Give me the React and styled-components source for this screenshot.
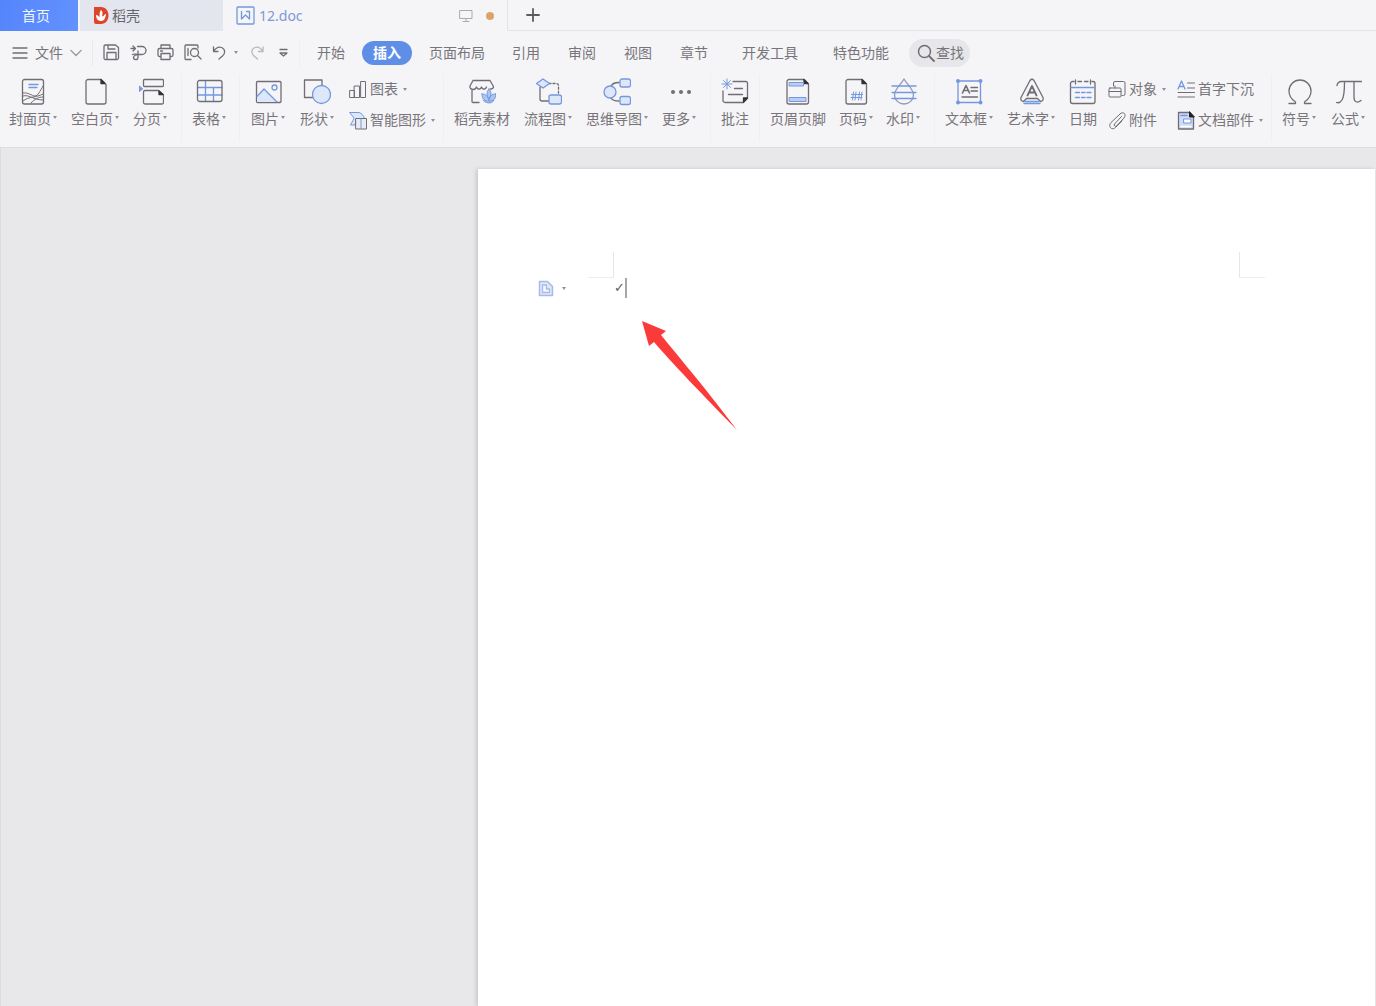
import styled, { createGlobalStyle } from "styled-components"

const GlobalStyle = createGlobalStyle`
    * {
        box-sizing: border-box;
    }
    body {
        margin: 0;
        font-family: "Noto Sans", "Noto Sans CJK SC", sans-serif;
        font-size: 14px;
        color: #77757a;
        background-color: #e8e7ea;
    }
    button {
        font: inherit;
        color: inherit;
        border: none;
        background: none;
        padding: 0;
        cursor: pointer;
        white-space: nowrap;
    }
`
const Container = styled.div`
    min-height: 100vh;
    display: flex;
    flex-direction: column;
    overflow-x: hidden;
`
const Header = styled.header`
    background-color: #f5f4f7;
    border-bottom: 1px solid #dcdbdf;
`
const TabBar = styled.div`
    display: flex;
    height: 31px;
    line-height: 20px;
`
const HomeTab = styled.button`
    width: 78px;
    padding-right: 6px;
    color: #f2f6ff;
    background: linear-gradient(100deg, #5585fb, #6292ff);
`
const DockerTab = styled.button`
    display: flex;
    align-items: center;
    gap: 3px;
    width: 143px;
    margin-left: 2px;
    padding-left: 13px;
    color: #66656b;
    background-color: #e4e6ef;
`
const FileTab = styled.div`
    display: flex;
    align-items: center;
    width: 285px;
    padding: 0 13px;
    color: #7c9ad6;
    border-right: 1px solid #e2e1e6;
`
const FileName = styled.span`
    flex: 1;
    margin-left: 4px;
`
const UnsavedDot = styled.span`
    width: 8px;
    height: 8px;
    margin-left: 13px;
    border-radius: 50%;
    background-color: #dca568;
`
const TabRest = styled.div`
    flex: 1;
    display: flex;
    border-bottom: 1px solid #e4e3e8;
`
const NewTab = styled.button`
    display: flex;
    align-items: center;
    justify-content: center;
    width: 50px;
`
const MenuBar = styled.nav`
    display: flex;
    align-items: center;
    height: 43px;
    line-height: 20px;
`
const FileMenu = styled.button`
    display: flex;
    align-items: center;
    gap: 7px;
    height: 26px;
    padding: 0 10px 0 12px;
    border-right: 1px solid #e9e8ec;
`
const QuickBar = styled.div`
    display: flex;
    align-items: center;
    gap: 7px;
    height: 26px;
    padding: 0 5px 0 9px;
    border-right: 1px solid #eeedf0;
`
const QuickButton = styled.button`
    display: flex;
    align-items: center;
    gap: 2px;
    padding-left: ${props => props.$off ? 2 : 0}px;
    opacity: ${props => props.$off ? 0.45 : 1};
`
const MenuItem = styled.button`
    height: 24px;
    margin-left: ${props => props.$gap || 28}px;
    padding: ${props => props.$active ? "0 11px" : "0"};
    border-radius: 12px;
    font-weight: ${props => props.$active ? 700 : 400};
    color: ${props => props.$active ? "white" : "inherit"};
    background-color: ${props => props.$active ? "#5f8ee6" : "transparent"};
`
const Search = styled.button`
    display: flex;
    align-items: center;
    gap: 1px;
    height: 28px;
    margin-left: 20px;
    padding: 0 6px 0 8px;
    border-radius: 14px;
    background-color: #e7e6eb;
`
const Ribbon = styled.div`
    display: flex;
    height: 73px;
`
const Group = styled.div`
    flex: none;
    display: flex;
    align-items: flex-start;
    gap: ${props => props.$gap || 14}px;
    height: 68px;
    padding: 4px ${props => props.$end || 10}px 0 ${props => props.$start || 10}px;
    border-right: 1px solid ${props => props.$plain ? "transparent" : "#efeef1"};

    &:last-child {
        border-right: none;
    }
`
const ToolButton = styled.button`
    display: flex;
    flex-direction: column;
    align-items: center;
    gap: 4px;
`
const ToolLabel = styled.span`
    display: flex;
    align-items: center;
    line-height: 18px;
`
const Caret = styled.span`
    width: 4px;
    margin-left: 2px;
    border-top: 3px solid #929096;
    border-left: 2px solid transparent;
    border-right: 2px solid transparent;

    ${ToolLabel} & {
        margin-bottom: 3px;
    }
`
const SmallTools = styled.div`
    display: flex;
    gap: 11px;
    padding-top: 1px;
`
const SmallColumn = styled.div`
    display: flex;
    flex-direction: column;
    align-items: flex-start;
    gap: 11px;
`
const SmallButton = styled.button`
    display: flex;
    align-items: center;
    gap: 3px;
    height: 20px;
    line-height: 20px;
`
const Workspace = styled.main`
    flex: 1;
    display: flex;
    padding: 21px 1px 0 477px;
    border-left: 1px solid #dddce0;
`
const Paper = styled.article`
    position: relative;
    flex: 1;
    padding: 83px 110px 0 110px;
    background-color: white;
    box-shadow: -2px 0 4px #c9c8cb;
`
const Corners = styled.div`
    display: flex;
    justify-content: space-between;
`
const Corner = styled.span`
    width: 26px;
    height: 26px;
    border-bottom: 1px solid #ededef;
    border-left: ${props => props.$side === "right" ? "1px solid #e6e6e8" : "none"};
    border-right: ${props => props.$side === "left" ? "1px solid #e6e6e8" : "none"};
`
const Line = styled.div`
    display: flex;
    align-items: center;
    height: 20px;
    margin-left: -50px;
`
const PasteButton = styled.button`
    display: flex;
    align-items: center;
    gap: 6px;
`
const Typed = styled.span`
    margin-left: 48px;
    font-family: "DejaVu Sans", sans-serif;
    font-size: 13px;
    line-height: 20px;
    color: #5d5d5d;
    border-right: 2px solid #a5a5a5;
`
const Arrow = styled.svg`
    position: absolute;
    top: 152px;
    left: 164px;
`

const gray = "#706e74"
const blue = "#7498de"
const pale = "#dde7fa"

const Icon = ({ w = 28, h = 28, children }) => (
  <svg width={w} height={h} viewBox={`0 0 ${w} ${h}`} fill="none" stroke={gray} strokeWidth="1.3"
    strokeLinecap="round" strokeLinejoin="round" aria-hidden="true">
    {children}
  </svg>
)

const icons = {
  cover: <>
    <rect x="3.5" y="1.5" width="21" height="24.5" rx="2" />
    <path d="M10 6.5h9M10 9.5h8" stroke={blue} />
    <path d="M4 15c5-1 9 3 12 3s5-5 8-10M4 18c6-2 10 4 20 4M4 23c6-5 13-3 20-7M12 25c4-4 7-6 12-6" strokeWidth="1" />
  </>,
  blank: <>
    <path d="M20 1.5H7a2 2 0 0 0-2 2V24a2 2 0 0 0 2 2h16a2 2 0 0 0 2-2V6.5Z" />
    <path d="M20 1.5V5.5h4Z" fill="#333" stroke="#333" />
  </>,
  pageBreak: <>
    <rect x="7.5" y="1.5" width="20" height="7" rx="1" />
    <path d="M22.5 12.5H9a1.5 1.5 0 0 0-1.5 1.5v10.5a1.5 1.5 0 0 0 1.5 1.5h17a1.5 1.5 0 0 0 1.5-1.5V17Z" />
    <path d="M23 13v3.5h4Z" fill="#333" stroke="#333" />
    <path d="M3.5 8.5v5l3-2.5Z" fill={blue} stroke={blue} strokeWidth="1" />
  </>,
  table: <>
    <path d="M3 9.5h24M3 17h24M10.5 3v20M18.5 9.5v14" stroke={blue} />
    <rect x="2.5" y="2.5" width="24.5" height="21" rx="2" />
  </>,
  image: <>
    <rect x="2.5" y="3.5" width="24.5" height="21" rx="1" />
    <path d="M3 18.5 10 11l13 13H3Z" fill={pale} stroke="none" />
    <path d="m3 18.5 7-7.5 13 13" stroke={blue} />
    <circle cx="20.5" cy="9.5" r="2.5" stroke={blue} />
  </>,
  shapes: <>
    <rect x="1.5" y="2" width="17.5" height="17.5" />
    <circle cx="18.5" cy="16.5" r="9" fill={pale} stroke={blue} />
  </>,
  store: <>
    <path d="M5 2.5h17l3.5 6c0 2-2 2.5-3 2.5M5 2.5 2 8c-.5 2 1 3.5 3 3.5 2 0 3-1 3.5-2.5 1 3 4 3 5 0 1 3 4 3 5 0M4 12v11.5a1 1 0 0 0 1 1h6" />
    <path d="M21 11c3 3.5 2.5 6 0 10-2.5-4-3-6.5 0-10ZM14 16c4 0 6 2 7 7-5 0-7-2.5-7-7ZM27.5 16c-4 0-6 2-6.5 7 5 0 7-2.5 6.5-7ZM15 22c2 3 9 5 11 0" stroke={blue} fill="#aec5f2" strokeWidth="1" />
  </>,
  flow: <>
    <path d="M15 5.5h7.5a2 2 0 0 1 2 2V16" strokeDasharray="2 2" />
    <path d="M6 9v12a2 2 0 0 0 2 2h7" />
    <path d="m9 1 6.5 4.5L9 10 2.5 5.5Z" fill={pale} stroke={blue} />
    <rect x="15" y="17" width="12.5" height="9" rx="2" fill={pale} stroke={blue} />
  </>,
  mind: <>
    <path d="M8 8.5c1-3 3-4 8-4M8 20c1 2 3 3 8 3" />
    <circle cx="7" cy="14" r="6" fill={pale} stroke={blue} />
    <rect x="17" y="1" width="10.5" height="8" rx="2" fill={pale} stroke={blue} />
    <rect x="17" y="18.5" width="10.5" height="8" rx="2" fill={pale} stroke={blue} />
  </>,
  more: <g fill={gray} stroke="none">
    <circle cx="8" cy="14" r="2" />
    <circle cx="16" cy="14" r="2" />
    <circle cx="24" cy="14" r="2" />
  </g>,
  comment: <>
    <path d="M12 3.5h13a1.5 1.5 0 0 1 1.5 1.5v15l-4 4.5H4a2 2 0 0 1-2-2V13M13.5 10.5h8M7.5 16.5h14" />
    <path d="M22.5 24v-4h4Z" fill="#333" stroke="#333" />
    <path d="M6 1v10M1 6h10M2.5 2.5l7 7M9.5 2.5l-7 7" stroke={blue} strokeWidth="1" />
  </>,
  headerFooter: <>
    <path d="M20 1.5H5a2 2 0 0 0-2 2V24a2 2 0 0 0 2 2h17.5a2 2 0 0 0 2-2V6Z" />
    <path d="M20 1.5V5.5h4Z" fill="#333" stroke="#333" />
    <rect x="5.5" y="4.5" width="14" height="3.5" fill="#bccdf2" stroke={blue} strokeWidth="1" />
    <rect x="5.5" y="19.5" width="16.5" height="4" fill="#bccdf2" stroke={blue} strokeWidth="1" />
  </>,
  pageNumber: <>
    <path d="M20 1.5H6a2 2 0 0 0-2 2V24a2 2 0 0 0 2 2h16.500a2 2 0 0 0 2-2V6Z" />
    <path d="M20 1.5V5.5h4Z" fill="#333" stroke="#333" />
    <path d="M11.5 14 10.5 22M14 14l-1 8M17.5 14l-1 8M20 14l-1 8M9.5 16.5h11M9 19.5h11" stroke={blue} strokeWidth="1" />
  </>,
  watermark: <>
    <path d="M15 1c3 5.5 9.5 10 9.5 16a9.5 9 0 0 1-19 0C5.5 11 12 6.5 15 1Z" stroke="#8f9bb8" />
    <path d="M3 8h24M3 14.5h24M3 20.5h24" stroke={blue} />
  </>,
  textBox: <>
    <path d="M16 9.5h6.5M16 13h6.5M7 19h15.5" />
    <path d="M7.5 15 11 7.5 14.5 15M8.5 12.5h5" strokeWidth="1.6" />
    <rect x="3" y="3" width="22.5" height="21.5" stroke={blue} />
    <g fill={blue} stroke="none">
      <circle cx="3" cy="3" r="2" />
      <circle cx="25.5" cy="3" r="2" />
      <circle cx="3" cy="24.5" r="2" />
      <circle cx="25.5" cy="24.5" r="2" />
    </g>
  </>,
  wordArt: <>
    <path d="M13 2.5q2-2.5 4 0l9 17q1 3.5-2.5 4l-3-3H9.5l-3 3q-3.5-.5-2.5-4Z" />
    <path d="m10.5 17.5 4.5-9.5 4.5 9.5M12 14.5h6" strokeWidth="1.8" />
    <path d="M8 23.5h14M7 25.5h16" stroke={blue} />
  </>,
  date: <>
    <path d="M5 3.5H3.5A2 2 0 0 0 1.5 5.5v18a2 2 0 0 0 2 2H24a2 2 0 0 0 2-2v-18a2 2 0 0 0-2-2h-1M9 3.5h3.5M15.5 3.5H19M6.5 2v4M21.5 2v4" />
    <path d="M2 9.5h24M6.5 14.5h4M12.5 14.5h3.5M18 14.5h4M6.5 19.5h4M12.5 19.5h3.5M18 19.5h4" stroke={blue} />
  </>,
  omega: <path d="M4 25.5h6.5v-1.5C6 21 4 17 4 13a11 11 0 0 1 22 0c0 4-2 8-6.5 11v1.5H26" />,
  pi: <path d="M3 7.5C3.5 4.5 5 3.5 7.5 3.5H27.5M10.5 4c0 9-.5 15-2.5 18-1.5 2.5-4 3-5.5 2.5M20 4v15c0 5 3 6.5 7 3.5" />,
}

const smallIcons = {
  chart: <path d="M1 10.5h4.5v7H1ZM5.5 6h5v11.5h-5ZM12 1.5h4.5v16H12Z" strokeWidth="1" />,
  smart: <>
    <path d="M1 1.5h9c3 1 4.5 3 5.5 6H7.5L6 14H1.5L5 7.5Z" fill={pale} stroke={blue} strokeWidth="1" />
    <rect x="7" y="7.5" width="10.5" height="10.5" fill="#e8ebf2" strokeWidth="1" />
    <path d="M12 8v9.5" stroke={blue} strokeWidth="1" />
  </>,
  object: <g strokeWidth="1">
    <path d="M5.5 6V3A1.5 1.5 0 0 1 7 1.5h8.5A1.5 1.5 0 0 1 17 3v11a1.5 1.5 0 0 1-1.5 1.5H14" />
    <rect x="1" y="8" width="12" height="9" rx="1" />
    <path d="M1 11.5h12M7 8V6" />
  </g>,
  clip: <path d="m13.5 5.5-7 7.5c-1 1.500.5 3 2 2l7.5-8c3-4-1-7-4-4L3 11.5c-3.5 4 1 8.5 4.5 5L14 10" strokeWidth="1" />,
  dropCap: <>
    <path d="M10.5 3h7M10.5 8h7M1 12.5h16.5M1 17h16.5" strokeWidth="1" />
    <path d="m1 9 3.5-8L8 9M2.5 6.5h4.5" stroke={blue} />
  </>,
  parts: <>
    <path d="M1.5 1.5h11l4 4V18h-15Z" fill="#cfdcf6" />
    <path d="M12.5 1v5h4.5Z" fill="#222" stroke="#222" strokeWidth="1" />
    <path d="M4 4.5h6" stroke={blue} strokeWidth="1.5" />
    <rect x="7" y="8" width="7" height="4" fill="white" stroke={blue} strokeWidth="1" />
    <path d="M4 15.5h10" stroke="white" strokeWidth="1.5" />
  </>,
}

const Tool = ({ icon, text, drop }) => (
  <ToolButton type="button">
    <Icon>{icons[icon]}</Icon>
    <ToolLabel>{text}{drop && <Caret />}</ToolLabel>
  </ToolButton>
)

const SmallTool = ({ icon, text, drop }) => (
  <SmallButton type="button">
    <Icon w={18} h={19}>{smallIcons[icon]}</Icon>
    {text}
    {drop && <Caret />}
  </SmallButton>
)

const quickItems = [
  { name: "保存", icon: <path d="M3.5 2h10l3 2.5V15a1.5 1.5 0 0 1-1.5 1.5H3.5A1.5 1.5 0 0 1 2 15V3.5A1.5 1.5 0 0 1 3.5 2ZM6 2.5V6h7M5 16V9.5h9V16" /> },
  { name: "输出为PDF", icon: <path d="M2 5.5h4M4 3l2.5 2.5L4 8M8.5 3.5H13a4 4 0 0 1 0 8H9.5c-2.5 0-4-1-6 0M9 8v6.5c0 3-4.5 2.5-4.5 0 0-2 3-3 4.5-3" /> },
  { name: "打印", icon: <path d="M5 5.5V2h9v3.5M5 13.5H3.5A1.5 1.5 0 0 1 2 12V7a1.5 1.5 0 0 1 1.5-1.5h12A1.5 1.5 0 0 1 17 7v5a1.5 1.5 0 0 1-1.5 1.5H14M5 10.5h9v6H5ZM4.5 8h2" /> },
  { name: "打印预览", icon: <><path d="M8 16.5H3a1 1 0 0 1-1-1V3a1 1 0 0 1 1-1h11a1 1 0 0 1 1 1v2" /><circle cx="11.5" cy="9.5" r="4" /><path d="m14.5 12.5 3.5 3.5M5 5.5v7" /></> },
  { name: "撤销", drop: true, icon: <path d="M3.5 4v4.5h4.5M3.5 8.5c2-3 5-5 8-4 4 1.5 4 6 1 8.5L9 16" /> },
  { name: "恢复", off: true, icon: <path d="M16 4v4.5h-4.5M16 8.5c-2-3-5-5-8-4-4 1.5-4 6-1 8.5l3.5 3" /> },
  { name: "自定义", icon: <path d="M6 6.5h7M6 10l3.5 3 3.5-3Z" /> },
]

const menuItems = [
  { text: "开始", gap: 17 },
  { text: "插入", gap: 17, active: true },
  { text: "页面布局", gap: 17 },
  { text: "引用", gap: 27 },
  { text: "审阅" },
  { text: "视图" },
  { text: "章节" },
  { text: "开发工具", gap: 34 },
  { text: "特色功能", gap: 35 },
]

const App = () => {
  return (
    <Container>
      <GlobalStyle />
      <Header>
        <TabBar>
          <HomeTab type="button">首页</HomeTab>
          <DockerTab type="button">
            <Icon w={16} h={17}>
              <path d="M1 0h7c10 0 10 17 0 17H3a2 2 0 0 1-2-2Z" fill="#df4528" stroke="none" />
              <path d="M8 3c3 3 .5 4.5 1.5 6.5C11 9 11.5 7 13 7c-.5 4-1.5 7-5 7-3.5 0-5-3-5-6 2 0 2.5 1.5 3.5 2C7 7 6 5.5 8 3Z" fill="white" stroke="none" />
            </Icon>
            稻壳
          </DockerTab>
          <FileTab>
            <Icon w={19} h={19}>
              <g stroke={blue}>
                <rect x="1" y="1" width="17" height="17" rx="1" />
                <path d="M5.5 5.5v7.5l4-4 4 4V5.5h-3" />
              </g>
            </Icon>
            <FileName>12.doc</FileName>
            <Icon w={14} h={14}>
              <path d="M1 1.5h12v8H1ZM7 9.5v3M4 12.5h6" stroke="#aaa9ae" strokeWidth="1" />
            </Icon>
            <UnsavedDot />
          </FileTab>
          <TabRest>
            <NewTab type="button" aria-label="新建">
              <Icon w={14} h={14}>
                <path d="M7 1v12M1 7h12" stroke="#5c5b60" strokeWidth="1.8" />
              </Icon>
            </NewTab>
          </TabRest>
        </TabBar>
        <MenuBar>
          <FileMenu type="button">
            <Icon w={16} h={14}><path d="M1 2h14M1 7h14M1 12h14" /></Icon>
            文件
            <Icon w={12} h={8}><path d="m1 1.5 5 5 5-5" stroke="#9a999e" /></Icon>
          </FileMenu>
          <QuickBar>
            {quickItems.map(item => (
              <QuickButton key={item.name} type="button" aria-label={item.name} $off={item.off}>
                <Icon w={20} h={19}>{item.icon}</Icon>
                {item.drop && <Caret />}
              </QuickButton>
            ))}
          </QuickBar>
          {menuItems.map(item => (
            <MenuItem key={item.text} type="button" $gap={item.gap} $active={item.active}>{item.text}</MenuItem>
          ))}
          <Search type="button">
            <Icon w={18} h={18}>
              <circle cx="7.5" cy="7.5" r="6" strokeWidth="1.5" />
              <path d="m12 12 5 5" strokeWidth="1.8" />
            </Icon>
            查找
          </Search>
        </MenuBar>
        <Ribbon>
          <Group $start={9} $end={14}>
            <Tool icon="cover" text="封面页" drop />
            <Tool icon="blank" text="空白页" drop />
            <Tool icon="pageBreak" text="分页" drop />
          </Group>
          <Group $end={13}>
            <Tool icon="table" text="表格" drop />
          </Group>
          <Group $start={11} $end={8} $gap={15}>
            <Tool icon="image" text="图片" drop />
            <Tool icon="shapes" text="形状" drop />
            <SmallTools>
              <SmallColumn>
                <SmallTool icon="chart" text="图表" drop />
                <SmallTool icon="smart" text="智能图形" drop />
              </SmallColumn>
            </SmallTools>
          </Group>
          <Group $end={14}>
            <Tool icon="store" text="稻壳素材" />
            <Tool icon="flow" text="流程图" drop />
            <Tool icon="mind" text="思维导图" drop />
            <Tool icon="more" text="更多" drop />
          </Group>
          <Group>
            <Tool icon="comment" text="批注" />
          </Group>
          <Group $end={14} $gap={13}>
            <Tool icon="headerFooter" text="页眉页脚" />
            <Tool icon="pageNumber" text="页码" drop />
            <Tool icon="watermark" text="水印" drop />
          </Group>
          <Group $end={9} $plain>
            <Tool icon="textBox" text="文本框" drop />
            <Tool icon="wordArt" text="艺术字" drop />
            <Tool icon="date" text="日期" />
          </Group>
          <Group $start={1} $end={8}>
            <SmallTools>
              <SmallColumn>
                <SmallTool icon="object" text="对象" drop />
                <SmallTool icon="clip" text="附件" />
              </SmallColumn>
              <SmallColumn>
                <SmallTool icon="dropCap" text="首字下沉" />
                <SmallTool icon="parts" text="文档部件" drop />
              </SmallColumn>
            </SmallTools>
          </Group>
          <Group $gap={15}>
            <Tool icon="omega" text="符号" drop />
            <Tool icon="pi" text="公式" drop />
          </Group>
        </Ribbon>
      </Header>
      <Workspace>
        <Paper>
          <Corners>
            <Corner $side="left" />
            <Corner $side="right" />
          </Corners>
          <Line>
            <PasteButton type="button" aria-label="粘贴选项">
              <Icon w={16} h={17}>
                <path d="M1.5 1.5h8l5 5v9h-13Z" fill={pale} stroke="#a9bbe4" strokeWidth="1.5" />
                <path d="M4.5 5v7.5h7V9H8.5V5Z" fill="#f3f6fd" stroke="#a9bbe4" />
              </Icon>
              <Caret />
            </PasteButton>
            <Typed>✓</Typed>
          </Line>
          <Arrow width="96" height="110" viewBox="0 0 96 110" aria-hidden="true">
            <path d="M0 0 24 10 19 14C30 28 58 60 95 109 60 73 28 40 12 21L7 25Z" fill="#fb3a3a" />
          </Arrow>
        </Paper>
      </Workspace>
    </Container>
  )
}

export default App
